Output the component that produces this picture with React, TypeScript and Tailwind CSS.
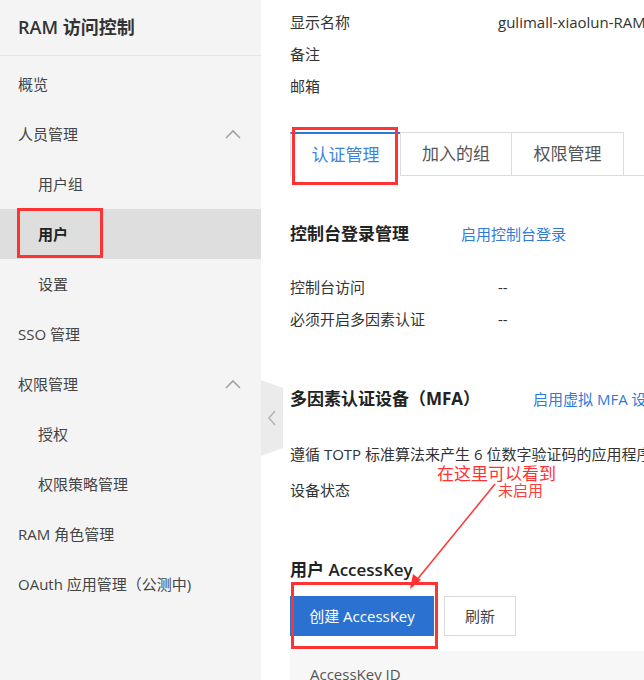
const font = { fontFamily: '"Open Sans", "Noto Sans CJK SC", sans-serif' };

const Chevron = () => (
  <svg width="16" height="10" viewBox="0 0 16 10" fill="none" stroke="#a3a3a3" strokeWidth="1.6">
    <path d="M1 9 L8 2 L15 9" />
  </svg>
);

const MenuItem = ({ label, sub, active, open }: { label: string; sub?: boolean; active?: boolean; open?: boolean }) => (
  <div
    className={`h-[50px] flex items-center justify-between pr-[20px] text-[15px] ${sub ? "pl-[38px]" : "pl-[18px]"} ${
      active ? "bg-[#dedede] font-bold text-[#222]" : "text-[#444]"
    }`}
  >
    <span>{label}</span>
    {open && <Chevron />}
  </div>
);

const InfoRow = ({ label, value, valueClass }: { label: string; value?: string; valueClass?: string }) => (
  <div className="h-8 flex items-center text-[15px] text-[#333] whitespace-nowrap">
    <span className="w-[208px] shrink-0">{label}</span>
    <span className={valueClass ?? "text-[#333]"}>{value}</span>
  </div>
);

export default function App() {
  return (
    <div className="relative w-[644px] h-[680px] overflow-hidden flex bg-white" style={font}>
      {/* sidebar */}
      <aside className="w-[261px] shrink-0 h-full bg-[#f4f4f4]">
        <div className="h-[56px] flex items-center pl-[18px] border-b border-[#e6e6e6] text-[18px] font-semibold text-[#333]">
          RAM 访问控制
        </div>
        <div className="pt-[3px]">
          <MenuItem label="概览" />
          <MenuItem label="人员管理" open />
          <MenuItem label="用户组" sub />
          <MenuItem label="用户" sub active />
          <MenuItem label="设置" sub />
          <MenuItem label="SSO 管理" />
          <MenuItem label="权限管理" open />
          <MenuItem label="授权" sub />
          <MenuItem label="权限策略管理" sub />
          <MenuItem label="RAM 角色管理" />
          <MenuItem label="OAuth 应用管理（公测中)" />
        </div>
      </aside>

      {/* collapse handle */}
      <div className="absolute left-[261px] top-[380px] w-[22px] h-[76px]">
        <svg width="22" height="76" viewBox="0 0 22 76">
          <path d="M0 0 L22 8 L22 68 L0 76 Z" fill="#ebebeb" />
          <path d="M14 31 L8 38 L14 45" fill="none" stroke="#b5b5b5" strokeWidth="1.6" />
        </svg>
      </div>

      {/* main */}
      <main className="flex-1 min-w-0 pl-[29px] pt-[6px] text-[#333]">
        <InfoRow label="显示名称" value="gulimall-xiaolun-RAM" />
        <InfoRow label="备注" />
        <InfoRow label="邮箱" />

        <div className="mt-[30px] flex h-[44px] text-[17px]">
          <div className="w-[110px] flex items-center justify-center border-t-2 border-t-[#2f77d6] border-l border-l-[#e3e3e3] text-[#3d84dd]">
            认证管理
          </div>
          <div className="w-[112px] flex items-center justify-center border border-[#dcdcdc] text-[#555]">加入的组</div>
          <div className="w-[112px] flex items-center justify-center border border-l-0 border-[#dcdcdc] text-[#555]">权限管理</div>
          <div className="flex-1 border-b border-[#dcdcdc]" />
        </div>

        <div className="mt-[46px] flex items-center h-[24px]">
          <span className="w-[171px] text-[17px] font-bold text-[#222]">控制台登录管理</span>
          <span className="text-[15px] text-[#2f7bd8]">启用控制台登录</span>
        </div>

        <div className="mt-[25px]">
          <InfoRow label="控制台访问" value="--" />
          <InfoRow label="必须开启多因素认证" value="--" />
        </div>

        <div className="mt-[52px] flex items-center h-[24px] whitespace-nowrap">
          <span className="w-[243px] shrink-0 text-[17px] font-bold text-[#222]">多因素认证设备（MFA）</span>
          <span className="text-[15px] text-[#2f7bd8]">启用虚拟 MFA 设备</span>
        </div>

        <div className="mt-[31px] h-[24px] flex items-center text-[15px] text-[#333] whitespace-nowrap">
          遵循 TOTP 标准算法来产生 6 位数字验证码的应用程序
        </div>

        <div className="mt-[8px]">
          <InfoRow label="设备状态" value="未启用" valueClass="text-[#ff3b3b]" />
        </div>

        <div className="mt-[52px] h-[24px] flex items-center text-[17px] font-semibold text-[#222]">用户 AccessKey</div>

        <div className="mt-[14px] flex gap-[10px]">
          <button className="w-[144px] h-[40px] bg-[#2b72d0] text-white text-[15px]">创建 AccessKey</button>
          <button className="w-[72px] h-[40px] bg-white border border-[#dcdcdc] text-[#444] text-[15px]">刷新</button>
        </div>

        <div className="mt-[15px] h-[50px] bg-[#f7f7f7] pl-[20px] pt-[12px] text-[15px] text-[#555]">AccessKey ID</div>
      </main>

      {/* annotations */}
      <div className="absolute left-[17px] top-[208px] w-[86px] h-[50px] border-[3px] border-[#ff3333]" />
      <div className="absolute left-[292px] top-[127px] w-[106px] h-[58px] border-[3px] border-[#ff3333]" />
      <div className="absolute left-[291px] top-[582px] w-[147px] h-[67px] border-[3px] border-[#ff3333]" />
      <div className="absolute left-[437px] top-[465px] text-[17px] text-[#ff3333] leading-none">在这里可以看到</div>
      <svg className="absolute left-0 top-0" width="644" height="680" viewBox="0 0 644 680">
        <line x1="495" y1="484" x2="416" y2="581" stroke="#ff3333" strokeWidth="1.5" />
        <path d="M410 589 L413 574 L421 580 Z" fill="#ff3333" />
      </svg>
    </div>
  );
}
